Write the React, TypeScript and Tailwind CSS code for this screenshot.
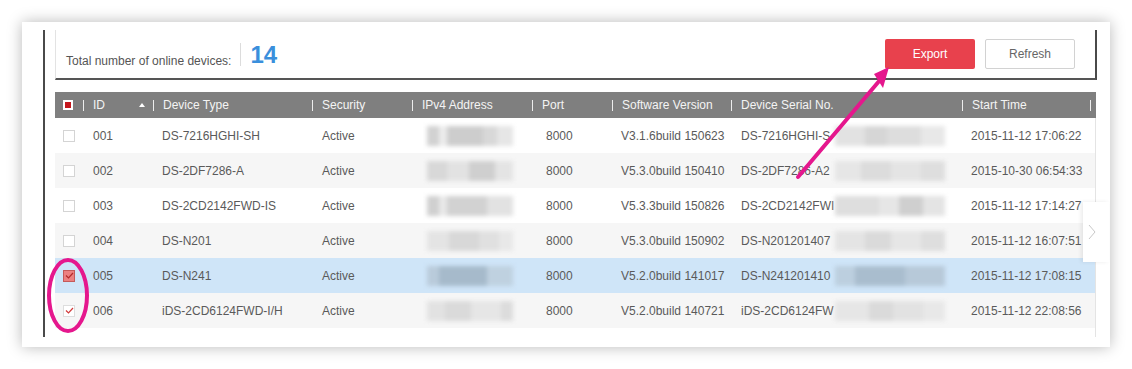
import React from "react";

type Seg = [number, string];

const rows = [
  {
    id: "001",
    type: "DS-7216HGHI-SH",
    sw: "V3.1.6build 150623",
    serial: "DS-7216HGHI-S",
    time: "2015-11-12 17:06:22",
    bg: "bg-white",
    check: "none",
    ip: [[12, "#d2d2d2"], [8, "#ececec"], [36, "#cdcdcd"], [14, "#d8d8d8"], [16, "#e6e6e6"]] as Seg[],
    sn: [[30, "#e2e2e2"], [22, "#d6d6d6"], [34, "#dddddd"], [24, "#e8e8e8"]] as Seg[],
  },
  {
    id: "002",
    type: "DS-2DF7286-A",
    sw: "V5.3.0build 150410",
    serial: "DS-2DF7286-A2",
    time: "2015-10-30 06:54:33",
    bg: "bg-[#f6f6f6]",
    check: "none",
    ip: [[20, "#d8d8d8"], [22, "#e2e2e2"], [26, "#cfcfcf"], [18, "#e4e4e4"]] as Seg[],
    sn: [[26, "#e6e6e6"], [30, "#dcdcdc"], [30, "#e4e4e4"], [24, "#dedede"]] as Seg[],
  },
  {
    id: "003",
    type: "DS-2CD2142FWD-IS",
    sw: "V5.3.3build 150826",
    serial: "DS-2CD2142FWI",
    time: "2015-11-12 17:14:27",
    bg: "bg-white",
    check: "none",
    ip: [[12, "#d0d0d0"], [8, "#e8e8e8"], [40, "#d2d2d2"], [26, "#e2e2e2"]] as Seg[],
    sn: [[44, "#dedede"], [20, "#e6e6e6"], [24, "#cfcfcf"], [22, "#e4e4e4"]] as Seg[],
  },
  {
    id: "004",
    type: "DS-N201",
    sw: "V5.3.0build 150902",
    serial: "DS-N201201407",
    time: "2015-11-12 16:07:51",
    bg: "bg-[#f6f6f6]",
    check: "none",
    ip: [[22, "#e4e4e4"], [30, "#d8d8d8"], [20, "#e0e0e0"], [14, "#e8e8e8"]] as Seg[],
    sn: [[30, "#e4e4e4"], [26, "#dadada"], [30, "#e6e6e6"], [24, "#dedede"]] as Seg[],
  },
  {
    id: "005",
    type: "DS-N241",
    sw: "V5.2.0build 141017",
    serial: "DS-N241201410",
    time: "2015-11-12 17:08:15",
    bg: "bg-[#cfe5f8]",
    check: "filled",
    ip: [[12, "#b9cbdb"], [48, "#a6bacb"], [26, "#bfd1e0"]] as Seg[],
    sn: [[20, "#bccfdf"], [50, "#a9bdce"], [40, "#b7c9d9"]] as Seg[],
  },
  {
    id: "006",
    type: "iDS-2CD6124FWD-I/H",
    sw: "V5.2.0build 140721",
    serial: "iDS-2CD6124FW",
    time: "2015-11-12 22:08:56",
    bg: "bg-[#f6f6f6]",
    check: "tick",
    ip: [[18, "#e2e2e2"], [26, "#dadada"], [30, "#e6e6e6"], [12, "#dcdcdc"]] as Seg[],
    sn: [[34, "#e6e6e6"], [24, "#dadada"], [30, "#e2e2e2"], [22, "#e8e8e8"]] as Seg[],
  },
];

function Blur({ segs, w }: { segs: Seg[]; w: number }) {
  return (
    <div className="flex h-[20px] items-stretch blur-[2px] shrink-0" style={{ width: w }}>
      {segs.map(([sw, c], i) => (
        <div key={i} style={{ width: sw, background: c }} />
      ))}
    </div>
  );
}

function Check({ kind }: { kind: string }) {
  if (kind === "filled")
    return (
      <div className="w-[12px] h-[12px] border border-[#c45a5a] bg-[#ec8080] flex items-center justify-center">
        <svg width="9" height="7" viewBox="0 0 9 7">
          <polyline points="1,3.5 3.5,6 8,1" fill="none" stroke="#b22a2a" strokeWidth="1.2" />
        </svg>
      </div>
    );
  if (kind === "tick")
    return (
      <div className="w-[12px] h-[12px] border border-[#dddddd] bg-white flex items-center justify-center">
        <svg width="9" height="7" viewBox="0 0 9 7">
          <polyline points="1,3.5 3.5,6 8,1" fill="none" stroke="#d23a3a" strokeWidth="1.2" />
        </svg>
      </div>
    );
  return <div className="w-[12px] h-[12px] border border-[#d4d4d4] bg-white" />;
}

function Sep() {
  return <div className="w-px h-[11px] bg-[#ededed] shrink-0" />;
}

const cols = "grid grid-cols-[28px_70px_159px_100px_120px_80px_119px_231px_134px]";

export default function App() {
  return (
    <div
      className="relative w-[1132px] h-[369px] bg-white overflow-hidden pt-[22px] pl-[22px]"
      style={{ fontFamily: '"Liberation Sans", Arial, sans-serif' }}
    >
      <div className="w-[1088px] h-[325px] bg-white shadow-[0_0_14px_rgba(0,0,0,0.28)] pt-[8px] pl-[21px]">
        <div className="w-[1054px] h-[307px] border-l-2 border-[#4a4a4a] pl-[10px]">
          {/* summary bar */}
          <div className="h-[50px] w-[1042px] flex justify-between border-l border-l-[#e3e3e3] border-r-2 border-r-[#4a4a4a] border-b-2 border-b-[#555555] pl-[10px]">
            <div className="flex items-start mt-[13px]">
              <span className="text-[12px] leading-[14px] text-[#555] mt-[11px]">
                Total number of online devices:
              </span>
              <div className="w-px h-[23px] bg-[#dcdcdc] ml-[9px]" />
              <span className="text-[24px] leading-[24px] font-bold text-[#3a8fdc] ml-[9px]">14</span>
            </div>
            <div className="flex gap-[10px] mt-[9px] mr-[20px] self-start">
              <button className="w-[90px] h-[30px] bg-[#e8414d] text-white text-[12px] rounded-[2px]">
                Export
              </button>
              <button className="w-[90px] h-[30px] bg-white border border-[#d2d2d2] text-[#666] text-[12px] rounded-[2px]">
                Refresh
              </button>
            </div>
          </div>

          {/* table */}
          <div className="mt-[12px] w-[1041px]">
            <div className={`${cols} h-[26px] bg-[#7f7f7f] text-[#f4f4f4] text-[12px] items-center`}>
              <div className="pl-[8px]">
                <div className="w-[10px] h-[10px] bg-white flex items-center justify-center">
                  <div className="w-[6px] h-[6px] bg-[#c4161c]" />
                </div>
              </div>
              <div className="flex items-center">
                <Sep />
                <span className="ml-[9px]">ID</span>
                <div className="ml-auto mr-[8px] w-0 h-0 border-l-[3px] border-r-[3px] border-b-[4px] border-l-transparent border-r-transparent border-b-white" />
              </div>
              {["Device Type", "Security", "IPv4 Address", "Port", "Software Version", "Device Serial No."].map((h) => (
                <div key={h} className="flex items-center">
                  <Sep />
                  <span className="ml-[9px]">{h}</span>
                </div>
              ))}
              <div className="flex items-center pr-[5px]">
                <Sep />
                <span className="ml-[9px]">Start Time</span>
                <div className="ml-auto">
                  <Sep />
                </div>
              </div>
            </div>

            <div className="border-r border-[#e4e4e4] h-[219px]">
              {rows.map((r) => (
                <div key={r.id} className={`${cols} h-[35px] items-center text-[12px] text-[#5a5a5a] ${r.bg}`}>
                  <div className="pl-[8px]">
                    <Check kind={r.check} />
                  </div>
                  <div className="pl-[10px]">{r.id}</div>
                  <div className="pl-[9px]">{r.type}</div>
                  <div className="pl-[10px]">Active</div>
                  <div className="pl-[15px]">
                    <Blur segs={r.ip} w={86} />
                  </div>
                  <div className="pl-[14px]">8000</div>
                  <div className="pl-[9px] whitespace-nowrap">{r.sw}</div>
                  <div className="pl-[10px] flex items-center">
                    <div className="w-[94px] whitespace-nowrap">{r.serial}</div>
                    <Blur segs={r.sn} w={110} />
                  </div>
                  <div className="pl-[9px] whitespace-nowrap">{r.time}</div>
                </div>
              ))}
            </div>
          </div>
        </div>
      </div>

      {/* pager handle */}
      <div className="absolute left-[1083px] top-[202px] w-[26px] h-[60px] bg-white shadow-[-2px_0_4px_rgba(0,0,0,0.08)] flex items-center pl-[5px]">
        <svg width="8" height="16" viewBox="0 0 8 16">
          <polyline points="1,1 7,8 1,15" fill="none" stroke="#c8c8c8" strokeWidth="1" />
        </svg>
      </div>

      {/* annotations */}
      <svg className="absolute left-0 top-0 pointer-events-none" width="1132" height="369" viewBox="0 0 1132 369">
        <line x1="798" y1="177" x2="880" y2="80" stroke="#e5178d" strokeWidth="4" strokeLinecap="round" />
        <polygon points="889,67 874,74 883,88" fill="#e5178d" />
        <ellipse cx="68" cy="295.5" rx="19" ry="35.5" fill="none" stroke="#e5178d" strokeWidth="4" />
      </svg>
    </div>
  );
}
